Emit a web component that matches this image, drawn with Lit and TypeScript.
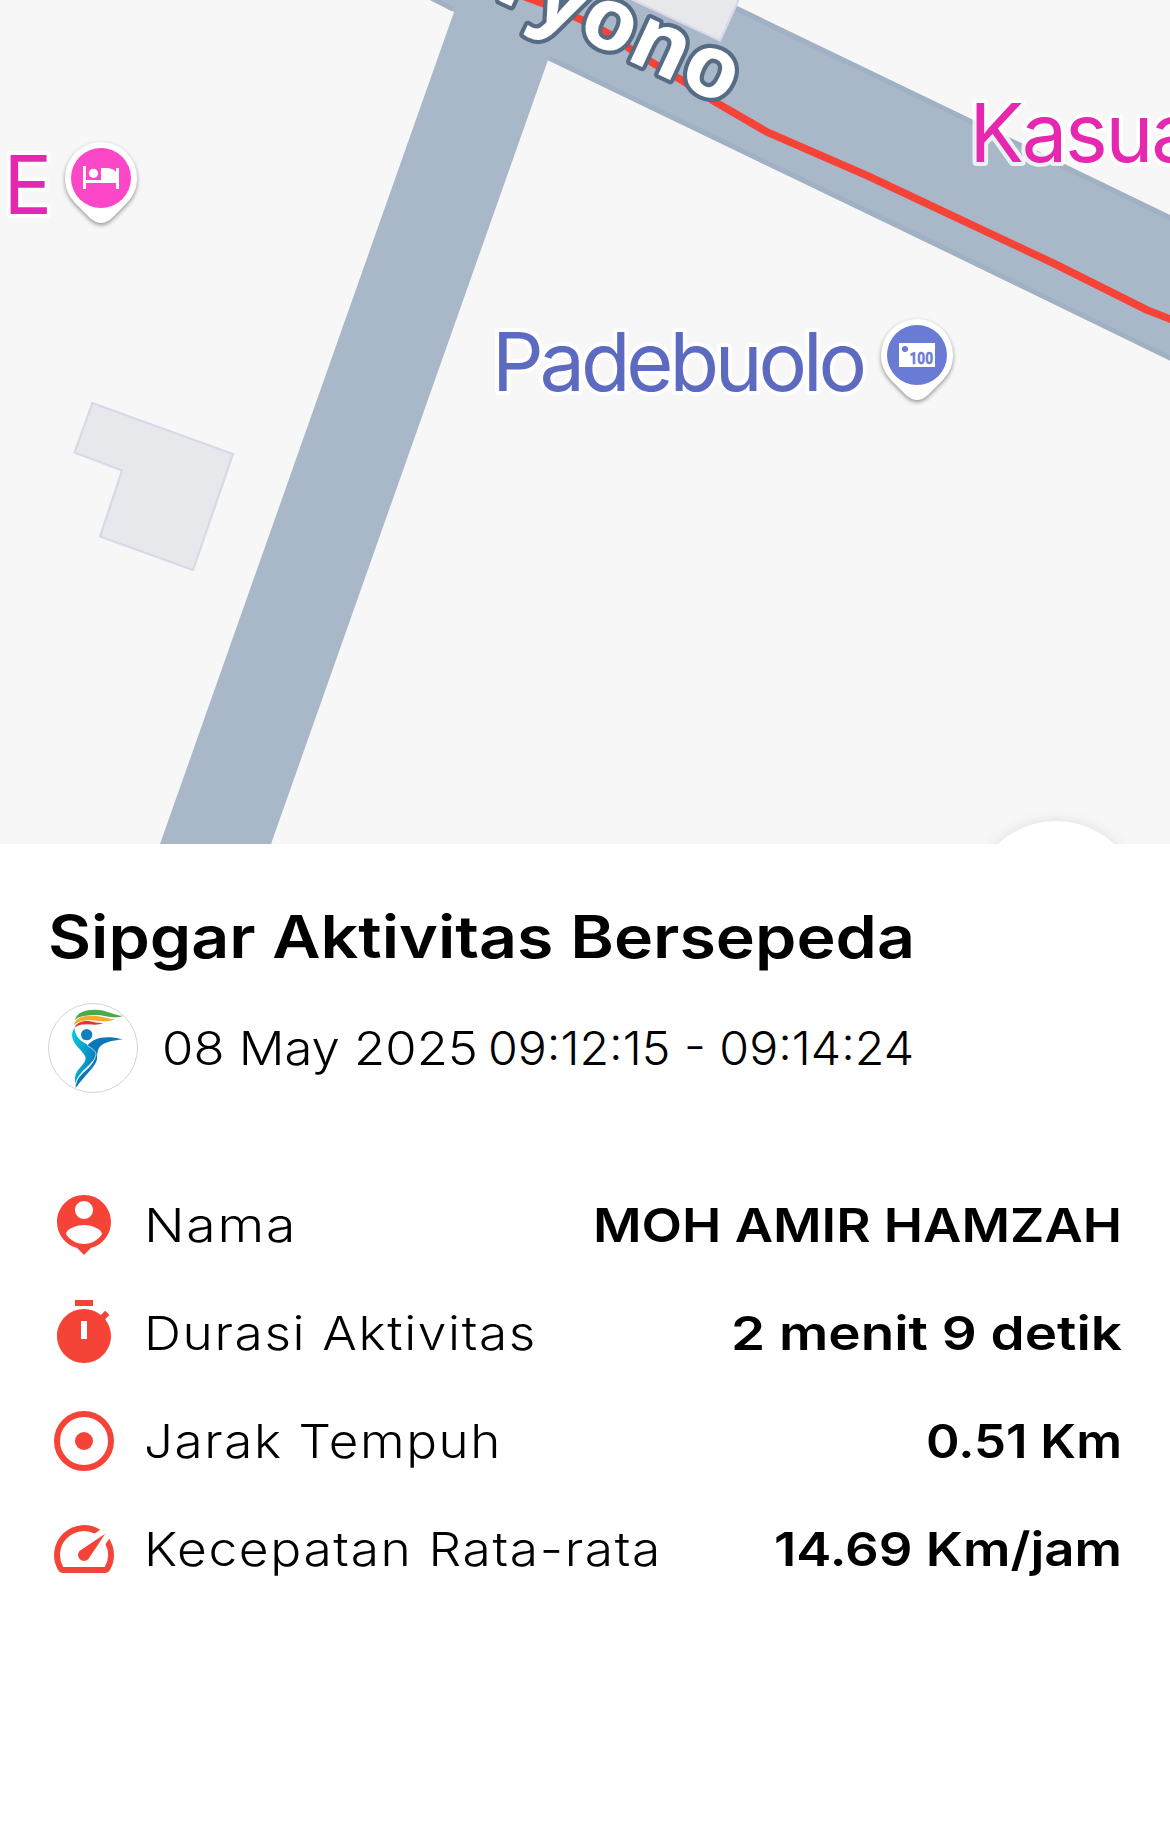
import {LitElement, html, svg, css} from 'lit';
import {customElement, property} from 'lit/decorators.js';

const ICONS = {
  person: svg`<path d="M12 2c-4.97 0-9 4.03-9 9 0 4.17 2.84 7.67 6.69 8.69L12 22l2.31-2.31C18.16 18.67 21 15.17 21 11c0-4.97-4.03-9-9-9zm0 2c1.66 0 3 1.34 3 3s-1.34 3-3 3-3-1.34-3-3 1.34-3 3-3zm0 14.3c-2.5 0-4.71-1.28-6-3.22.03-1.99 4-3.08 6-3.08 1.99 0 5.97 1.09 6 3.08-1.29 1.94-3.5 3.22-6 3.22z"/>`,
  timer: svg`<path fill-rule="evenodd" d="M15 1H9v2h6V1zm-4 13h2V8h-2v6zm8.03-6.61l1.42-1.42c-.43-.51-.9-.99-1.41-1.41l-1.42 1.42C16.07 4.74 14.12 4 12 4c-4.97 0-9 4.03-9 9s4.02 9 9 9 9-4.03 9-9c0-2.12-.74-4.07-1.97-5.61z"/>`,
  target: svg`<circle cx="12" cy="12" r="9" fill="none" stroke="currentColor" stroke-width="2"/><circle cx="12" cy="12" r="3"/>`,
  speed: svg`<path d="M20.38 8.57l-1.23 1.85a8 8 0 0 1-.22 7.58H5.07A8 8 0 0 1 15.58 6.85l1.85-1.23A10 10 0 0 0 3.35 19a2 2 0 0 0 1.72 1h13.85a2 2 0 0 0 1.74-1 10 10 0 0 0-.27-10.44zm-9.79 6.84a2 2 0 0 0 2.83 0l5.66-8.49-8.49 5.66a2 2 0 0 0 0 2.83z"/>`,
};

const STATS = [
  {icon: 'person', label: 'Nama', labelWidth: 153, value: 'MOH AMIR HAMZAH', valueWidth: 529},
  {icon: 'timer', label: 'Durasi Aktivitas', labelWidth: 393, value: '2 menit 9 detik', valueWidth: 391},
  {icon: 'target', label: 'Jarak Tempuh', labelWidth: 358, value: '0.51 Km', valueWidth: 196},
  {icon: 'speed', label: 'Kecepatan Rata-rata', labelWidth: 518, value: '14.69 Km/jam', valueWidth: 348},
];

// one line of text stretched to a given width
@customElement('fit-text')
export class FitText extends LitElement {
  static styles = css`
    :host {
      display: block;
      flex: none;
    }
    svg {
      display: block;
      overflow: visible;
    }
  `;

  @property() text = '';
  @property({type: Number}) width = 0;
  @property({type: Number}) height = 72;
  @property({type: Number}) baseline = 53;

  render() {
    return html`
      <svg width=${this.width} height=${this.height}>
        <text x="0" y=${this.baseline} textLength=${this.width} lengthAdjust="spacingAndGlyphs">${this.text}</text>
      </svg>
    `;
  }
}

@customElement('activity-map')
export class ActivityMap extends LitElement {
  static styles = css`
    :host {
      display: block;
      position: relative;
      height: 844px;
      overflow: hidden;
      background: #f7f7f7;
    }
    .canvas {
      display: block;
    }
    .road {
      fill: #a9b8c9;
    }
    .kerb {
      fill: none;
      stroke: #a0b1c4;
      stroke-width: 5;
    }
    .building {
      fill: #e7e8ec;
      stroke: #d8d9e7;
      stroke-width: 2.2;
      stroke-linejoin: round;
    }
    .route {
      fill: none;
      stroke: #f64337;
      stroke-width: 7.6;
      stroke-linejoin: round;
    }
    .poi {
      font: 400 81px Inter, sans-serif;
      paint-order: stroke;
      stroke: rgba(255, 255, 255, 0.8);
      stroke-width: 8;
      stroke-linejoin: round;
    }
    .pink {
      fill: #e628b0;
    }
    .indigo {
      fill: #5c6bc0;
    }
    .street {
      font: 700 87px 'Noto Sans', sans-serif;
      letter-spacing: 0.5px;
      fill: #fff;
      paint-order: stroke;
      stroke: #566b84;
      stroke-width: 8.5;
      stroke-linejoin: round;
    }
    .pin {
      fill: #fff;
      filter: drop-shadow(0 2px 2px rgba(0, 0, 0, 0.4));
    }
    .bill {
      font: 700 17px Roboto, sans-serif;
      fill: #6a7bd5;
      stroke: #6a7bd5;
      stroke-width: 0.5;
    }
    .fab {
      position: absolute;
      left: 971px;
      top: 821px;
      width: 170px;
      height: 170px;
      border-radius: 50%;
      background: #fff;
      box-shadow: 0 0 14px rgba(0, 0, 0, 0.1);
    }
  `;

  _pin(x: number, y: number, color: string, glyph: unknown) {
    return svg`
      <g transform="translate(${x} ${y})">
        <path class="pin" d="M0-36A36 36 0 0 0-36 0C-36 11-32 18-26 25L-11 40Q0 50 11 40L26 25C32 18 36 11 36 0A36 36 0 0 0 0-36z"/>
        <circle r="30" fill=${color}/>
        ${glyph}
      </g>
    `;
  }

  render() {
    return html`
      <svg class="canvas" width="1170" height="844">
        <path class="road" d="M430 0L454 12L160 844H271L548 60L1170 360V215L725 0z"/>
        <path class="kerb" d="M424-6L453 9"/>
        <path class="kerb" d="M549 58L757 158L930 241L1176 361"/>
        <path class="kerb" d="M722 2L930 102L1176 221"/>
        <path class="building" d="M631-1L720 40.5L739-1z"/>
        <path class="building" d="M92.3 403L233 454L193 570L100 536.5L122 470.5L74.5 452.5z"/>
        <path class="route" d="M520-5L550 6L582 20L613 36L633 51L683 81L717 103L767 132L868 176L1055 264L1147 310L1175 321"/>
        <text class="street" x="726" y="106" text-anchor="end" transform="rotate(24.9 726 106)">Haryono</text>
        <text class="poi pink" x="3.5" y="214">E</text>
        <text class="poi pink" x="969.5" y="161.7" letter-spacing="-2.2">Kasual</text>
        <text class="poi indigo" x="492" y="391" textLength="375">Padebuolo</text>
        ${this._pin(101, 178, '#fc47c8', svg`
          <path fill="#fff" d="M-18-12h3V2H0V-10h5q7 0 10 4v-4h3V11h-3V5h-30v6h-3z"/>
          <circle cx="-7.5" cy="-4.7" r="4.6" fill="#fff"/>
        `)}
        ${this._pin(917, 355, '#6a7bd5', svg`
          <path fill="#fff" d="M-18-12h36v24h-36z"/>
          <circle cx="-12" cy="-6" r="3" fill="#6a7bd5"/>
          <text class="bill" x="-7.5" y="9" textLength="23.5" lengthAdjust="spacingAndGlyphs">100</text>
        `)}
      </svg>
      <div class="fab"></div>
    `;
  }
}

@customElement('app-root')
export class AppRoot extends LitElement {
  static styles = css`
    :host {
      display: block;
      height: 1839px;
      overflow: hidden;
      background: #fff;
      color: #000;
      font-family: Inter, sans-serif;
    }
    .sheet {
      padding: 46px 48px 0;
    }
    .title {
      font-size: 58.5px;
      font-weight: 560;
    }
    .when {
      display: flex;
      margin: 13px 0 96px;
    }
    .logo {
      flex: none;
      box-sizing: border-box;
      width: 90px;
      height: 90px;
      margin-right: 24px;
      border: 1px solid #d4d4d4;
      border-radius: 50%;
    }
    .date,
    .label {
      font-size: 46.8px;
      font-weight: 300;
    }
    .time {
      margin-left: 10px;
    }
    .label {
      margin-left: 24px;
      letter-spacing: 1.5px;
    }
    .value {
      margin-left: auto;
      font-size: 46.8px;
      font-weight: 560;
    }
    .stats {
      display: flex;
      flex-direction: column;
      gap: 36px;
    }
    .row {
      display: flex;
      align-items: center;
      height: 72px;
    }
    .icon {
      flex: none;
      width: 72px;
      height: 72px;
      fill: currentColor;
      color: #f64337;
    }
  `;

  _logo() {
    return html`
      <svg class="logo" viewBox="27 42 264 264">
        <defs>
          <linearGradient id="body" x1="0" y1="0" x2="1" y2="0.4">
            <stop offset="0.1" stop-color="#00c8dc"/>
            <stop offset="1" stop-color="#0a7fbe"/>
          </linearGradient>
        </defs>
        <path fill="#4aaa4a" d="M104 90C110 70 130 59 165 59C200 59 215 74 250 78C215 90 190 70 150 76C125 78 112 82 104 90z"/>
        <path fill="#f3ac2e" d="M102 106C104 86 125 77 155 77C185 77 200 86 224 88C195 102 175 89 145 91C122 92 110 98 102 106z"/>
        <path fill="#dc3a2c" d="M104 114C108 98 125 92 145 93C160 94 170 100 190 99C170 108 155 102 140 103C120 104 112 106 104 114z"/>
        <circle cx="140" cy="134" r="17" fill="#0a82be"/>
        <path fill="#0a78b8" d="M142 167C160 145 190 134 249 148C215 152 192 158 181 169C172 178 172 190 171 208C165 232 140 250 107 294C105 270 125 253 145 235C160 220 166 205 166 192C160 180 152 175 142 167z"/>
        <path fill="url(#body)" d="M103 113C106 132 112 145 130 157C150 170 166 178 168 192C165 222 110 245 107 283C103 270 104 255 112 243C125 225 140 215 136 200C128 182 95 160 96 135C97 125 100 118 103 113z"/>
        <path fill="none" stroke="#fff" stroke-width="2" d="M142 167C158 176 168 184 168 194C165 224 112 245 107 283"/>
      </svg>
    `;
  }

  _row(stat: (typeof STATS)[number]) {
    return html`
      <div class="row">
        <svg class="icon" viewBox="0 0 24 24">${ICONS[stat.icon]}</svg>
        <fit-text class="label" .text=${stat.label} .width=${stat.labelWidth}></fit-text>
        <fit-text class="value" .text=${stat.value} .width=${stat.valueWidth}></fit-text>
      </div>
    `;
  }

  render() {
    return html`
      <activity-map></activity-map>
      <div class="sheet">
        <fit-text class="title" .text=${'Sipgar Aktivitas Bersepeda'} .width=${867} .height=${100} .baseline=${68}></fit-text>
        <div class="when">
          ${this._logo()}
          <fit-text class="date" .text=${'08 May 2025'} .width=${316} .height=${90} .baseline=${62}></fit-text>
          <fit-text class="date time" .text=${'09:12:15 - 09:14:24'} .width=${426} .height=${90} .baseline=${62}></fit-text>
        </div>
        <div class="stats">${STATS.map((stat) => this._row(stat))}</div>
      </div>
    `;
  }
}
